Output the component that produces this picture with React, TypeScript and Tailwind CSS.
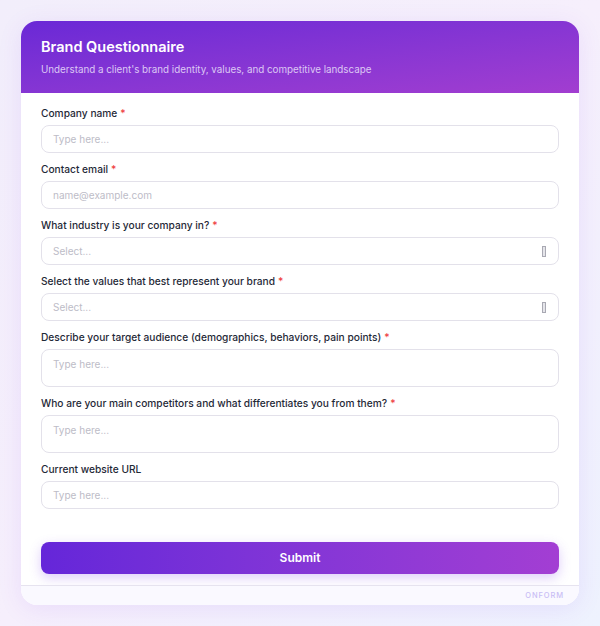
import React from 'react';

type Field = {
  label: string;
  required?: boolean;
  kind: 'input' | 'select' | 'textarea';
  placeholder: string;
};

const fields: Field[] = [
  { label: 'Company name', required: true, kind: 'input', placeholder: 'Type here...' },
  { label: 'Contact email', required: true, kind: 'input', placeholder: 'name@example.com' },
  { label: 'What industry is your company in?', required: true, kind: 'select', placeholder: 'Select...' },
  { label: 'Select the values that best represent your brand', required: true, kind: 'select', placeholder: 'Select...' },
  {
    label: 'Describe your target audience (demographics, behaviors, pain points)',
    required: true,
    kind: 'textarea',
    placeholder: 'Type here...',
  },
  {
    label: 'Who are your main competitors and what differentiates you from them?',
    required: true,
    kind: 'textarea',
    placeholder: 'Type here...',
  },
  { label: 'Current website URL', kind: 'input', placeholder: 'Type here...' },
];

function FormField({ field }: { field: Field }) {
  const height = field.kind === 'textarea' ? 'h-[38px] items-start pt-[8px]' : 'h-[28px] items-center';
  return (
    <div className="flex flex-col">
      <label className="text-[10.2px] leading-[14px] font-medium text-[#1f2937] mb-[5px]">
        {field.label}
        {field.required && <span className="text-[#ef4444] ml-[3px]">*</span>}
      </label>
      <div
        className={`flex ${height} justify-between rounded-[8px] border-[1.5px] border-[#e3e1ea] bg-white pl-[11px] pr-[12px]`}
      >
        <span className="text-[10px] leading-[12px] text-[#bdbcc7]">{field.placeholder}</span>
        {field.kind === 'select' && (
          <span className="w-[4px] h-[11px] border border-[#a9a9b3] bg-[#e5e5ea]" />
        )}
      </div>
    </div>
  );
}

export default function App() {
  return (
    <div
      className="w-[600px] h-[626px] bg-gradient-to-br from-[#f2eefb] via-[#f6effc] to-[#eef2fe] p-[21px]"
      style={{ fontFamily: 'Inter, "Noto Sans", sans-serif' }}
    >
      <div className="h-[584px] rounded-[16px] bg-white overflow-hidden shadow-[0_4px_24px_rgba(124,58,237,0.10)] flex flex-col">
        {/* Header */}
        <div className="h-[72px] shrink-0 bg-gradient-to-br from-[#6a28d6] to-[#a23dd0] px-[20px] pt-[16px]">
          <h1 className="text-[14.5px] leading-[20px] font-semibold text-white">Brand Questionnaire</h1>
          <p className="mt-[7px] text-[9.8px] leading-[12px] text-[#dcc8f4]">
            Understand a client's brand identity, values, and competitive landscape
          </p>
        </div>

        {/* Body */}
        <div className="flex-1 px-[20px] pt-[13px] flex flex-col gap-[9px]">
          {fields.map((f) => (
            <FormField key={f.label} field={f} />
          ))}
          <button className="mt-[24px] h-[32px] rounded-[8px] bg-gradient-to-r from-[#6526d9] to-[#a33ed3] text-white text-[12px] font-semibold shadow-[0_4px_12px_rgba(124,58,237,0.25)]">
            Submit
          </button>
        </div>

        {/* Footer */}
        <div className="h-[20px] shrink-0 border-t border-[#e6e3ef] bg-[#faf9ff] flex items-center justify-end pr-[15px]">
          <span className="text-[7.5px] tracking-[0.12em] font-medium text-[#c9bdf5]">ONFORM</span>
        </div>
      </div>
    </div>
  );
}
